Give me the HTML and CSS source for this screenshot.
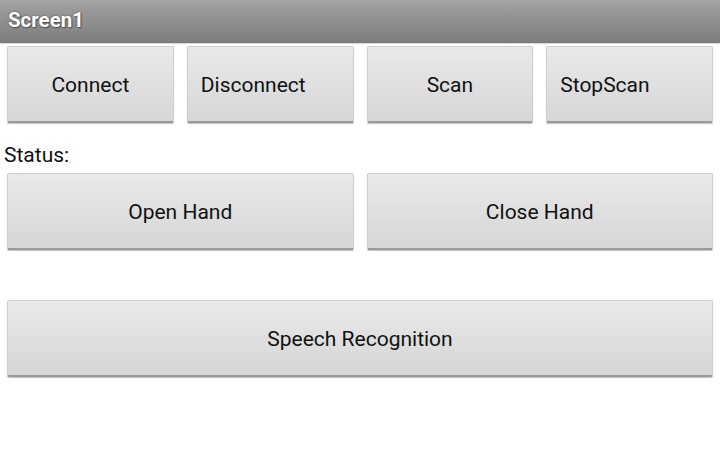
FILE: index.html
```html
<!DOCTYPE html>
<html>
<head>
<meta charset="utf-8">
<link rel="stylesheet" href="styles.css">
</head>
<body>
<div class="screen">
  <header class="titlebar"><span class="title">Screen1</span></header>
  <div class="row row-top">
    <button class="btn">Connect</button>
    <button class="btn btn-left">Disconnect</button>
    <button class="btn">Scan</button>
    <button class="btn btn-left">StopScan</button>
  </div>
  <div class="status">Status:</div>
  <div class="row row-hand">
    <button class="btn">Open Hand</button>
    <button class="btn">Close Hand</button>
  </div>
  <div class="row row-speech">
    <button class="btn">Speech Recognition</button>
  </div>
</div>
</body>
</html>
```
FILE: styles.css
```css
* { box-sizing: border-box; }
html, body { margin: 0; padding: 0; background: #ffffff; }
body { width: 720px; height: 469px; overflow: hidden; font-family: Roboto, "Noto Sans", sans-serif; }

.titlebar {
  height: 44px;
  background: linear-gradient(#a3a3a3, #7c7c7c);
  border-bottom: 1px solid #d8d8d8;
  display: flex;
  align-items: center;
  padding-left: 8px;
}
.title {
  color: #ffffff;
  font-weight: bold;
  font-size: 20.5px;
  text-shadow: 0 0 2px #444, 1px 1px 1px #555;
  margin-top: -3px;
}

.row { display: flex; padding: 0 7px 0 7px; gap: 13px; }
.row-top { margin-top: 2px; }
.row-hand { margin-top: 6px; }
.row-speech { margin-top: 50px; }

.btn {
  flex: 1;
  height: 77px;
  font-family: Roboto, "Noto Sans", sans-serif;
  font-size: 21px;
  color: #111111;
  background: linear-gradient(#e9e9e9, #d6d6d6);
  border: 1px solid #cfcfcf;
  border-bottom: 2px solid #9a9a9a;
  border-radius: 2px;
  box-shadow: 0 1px 1px rgba(0,0,0,0.25);
  padding: 2px 13px 0;
  text-align: center;
  margin: 0;
}
.btn-left { text-align: left; }

.status {
  font-size: 21px;
  color: #111111;
  line-height: 24px;
  height: 24px;
  margin-top: 20px;
  padding-left: 4px;
}
```
